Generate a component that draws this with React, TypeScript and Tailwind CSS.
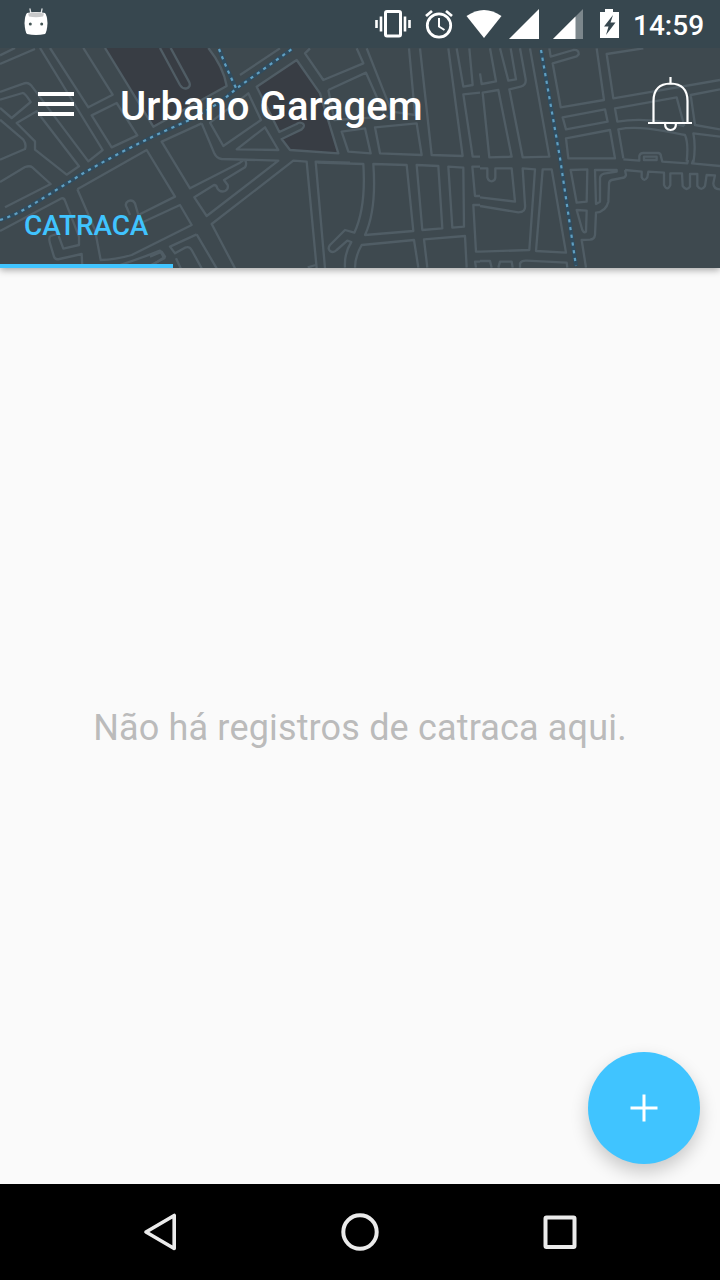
// The street map is drawn in tiles, each on a grid of a third of a pixel.
const mapTiles = [
  {
    x: 0,
    y: 48,
    d: "M0 22 45 0M0 48 105 3M120 0 308 306 265 340 98 118Q86 100 70 107L0 132M150 0 265 178 338 140 250 0M275 202 350 165 412 262 335 298ZM0 155 68 135Q75 135 92 162L35 210 0 180M0 215 70 275Q80 290 75 303L0 335M110 190 50 225 105 280 105 305 200 380 237 355ZM0 402 75 357Q90 352 97 358L152 408 15 478",
  },
  {
    x: 0,
    y: 130,
    d: "M0 303 185 205Q192 203 195 212L237 320 237 345 190 356 176 318M176 310 152 318Q145 322 150 340L162 380Q165 390 178 387L245 372 247 412M232 178 440 60 525 200 415 255 405 220Q398 208 385 213 373 220 380 232L390 255M232 178 285 300 302 390Q345 390 395 375L575 285 540 225 410 285M340 412Q430 382 480 362L493 385 440 412",
  },
  {
    x: 0,
    y: 0,
    d: "M315 144 460 380 680 258Q670 200 625 144M480 144 540 255Q548 268 560 265 573 260 568 247L512 144",
  },
  {
    x: 240,
    y: 40,
    d: "M0 105 120 25M50 140 170 60 240 160 295 340 150 330 125 297 185 268Q195 260 190 252 180 244 170 252L118 276ZM210 25 195 40 250 120 370 70 350 25M265 150 378 98 430 215M265 150 283 240 445 230M380 25 455 215 525 225 507 25M305 275 375 265 392 340 325 335ZM405 262 530 250 545 345 420 340ZM540 25 575 345 668 348 625 25M650 25 670 140 698 135 688 25M720 158 670 163 698 350 720 350",
  },
  {
    x: 150,
    y: 110,
    d: "M260 118 345 52 385 120ZM180 38 220 108 333 30 295 -50ZM155 40 35 95 120 235 270 158 280 150M155 40 192 128Q200 145 215 147L385 152 170 318 133 262 192 225Q200 225 202 235 210 248 225 243 236 238 233 225L222 210 285 172Q292 160 285 150M255 475 185 342 430 152 470 155 500 475M525 475 497 155 600 158M140 373 60 410 75 430 105 413Q118 408 125 420L155 475M140 373 200 475M0 440 35 425 45 440 0 470M78 445 92 475",
  },
  {
    x: 240,
    y: 150,
    d: "M232 38 370 42C375 120 370 190 343 248L315 240 270 285Q262 295 270 303 280 310 290 300L322 272 334 276Q312 310 315 353M400 42 500 45 520 243 375 255C405 190 405 110 400 42ZM345 353Q345 320 365 285L522 270 535 353M530 45 595 48 607 235 547 240ZM625 50 670 53 672 230 637 233ZM562 353 552 268 675 258 680 353M720 50 697 50 705 138 720 138M720 165 700 165 708 305 720 305M720 335 705 335 708 353M203 352 228 345",
  },
  {
    x: 480,
    y: 40,
    d: "M0 100 5 132 48 124 30 25M60 25 85 122 108 118 92 25M120 25 137 118Q139 136 122 140L88 148 128 352 208 350 150 25M8 158 55 150 95 350 28 352ZM208 25 212 50 280 30Q297 28 296 43L290 49 218 70 242 202 372 180 350 25M490 25 380 42 400 175 720 120M248 232 375 208 383 245 258 268ZM613 258 590 172 405 205 412 245Q500 230 613 258M720 148 632 165 645 255 720 268M258 295 390 270 405 355 265 355ZM430 355 415 268C480 255 560 275 615 285Q626 310 620 365M720 290 640 280Q648 320 640 370",
  },
  {
    x: 480,
    y: 150,
    d: "M430 28 478 32 478 18Q480 9 490 9L535 9Q543 10 543 20L547 35 622 40 624 30M640 30 636 40 720 48M492 20H530V30H492ZM0 55 22 55 22 82Q25 94 35 94 46 92 46 82L46 55 95 55 105 155 0 142M0 168 115 187Q138 187 135 165L128 55 165 58 148 300 0 305M188 58 215 58 258 308 168 303ZM272 60 322 58 320 155 290 158ZM290 180 320 182 318 245Q312 250 307 240ZM345 60 410 60 410 65 372 71Q360 75 360 85L360 155 348 162ZM435 60 438 75Q436 84 425 84L395 90Q387 92 387 102L385 155Q378 184 348 188L345 255Q343 268 330 269L305 270 318 353M435 60 485 65 485 82Q492 97 502 82L505 65 552 68 552 105Q562 125 571 105L571 70 606 70 608 108Q620 125 630 110L630 72 652 72 652 108Q664 125 675 108L680 75 705 76 700 100Q700 118 720 118M0 333 30 333 35 353M55 353 60 335 95 335 98 353M120 353 120 340Q125 331 140 332L260 338 262 353",
  },
];

const routes = [
  "M0 220Q16 215 32 205L82 174Q130 146 185 122 215 108 237 88L292 49",
  "M219 49Q227 70 237 90",
  "M541 50 560 158 576 266",
];

function StreetMap() {
  return (
    <svg
      className="absolute inset-0 h-full w-full"
      viewBox="0 48 720 220"
      fill="none"
    >
      <path
        d="M105 48 153 127 227 86Q223 67 208 48ZM257 87 297 60 320 93 338 153 290 150 281 138 303 128 301 123 279 132Z"
        fill="#383d44"
      />
      {mapTiles.map((tile) => (
        <path
          key={`${tile.x}-${tile.y}`}
          d={tile.d}
          transform={`translate(${tile.x} ${tile.y}) scale(.33333)`}
          stroke="#505d65"
          strokeWidth="7"
          strokeLinejoin="round"
        />
      ))}
      {routes.map((d) => (
        <g key={d}>
          <path d={d} stroke="#2f4c5f" strokeWidth="4" />
          <path d={d} stroke="#5f9fc2" strokeWidth="2.2" strokeDasharray="3.2 4.6" />
        </g>
      ))}
    </svg>
  );
}

function StatusBar() {
  return (
    <div className="relative z-10 flex h-12 items-center bg-[#37474f] text-white">
      <svg className="h-12 w-[60px]" viewBox="0 0 60 48">
        <path
          d="M30 9 31 14M42 9 41 14"
          stroke="#dde1e3"
          strokeWidth="1.3"
          strokeLinecap="round"
        />
        <path
          d="M27 13Q36 11 45 13 47 15 47.5 23 47 32 45 34 36 36 27 34 25 32 24.5 23 25 15 27 13Z"
          fill="#fff"
        />
        <path d="M28 13.5Q36 11.5 44 13.5L43 16.5Q36 18 29 16.5Z" fill="#c8c9ca" />
        <circle cx="30.3" cy="24" r="1.5" fill="#455" />
        <circle cx="41.7" cy="24" r="1.5" fill="#455" />
      </svg>
      <svg
        className="ml-auto h-12 w-[260px]"
        viewBox="370 0 260 48"
        fill="none"
        stroke="#fff"
      >
        {/* Vibrate */}
        <rect x="385.5" y="11.5" width="15" height="24.5" rx="1.5" strokeWidth="3" />
        <path d="M376.5 20V28M381 16.5V31.5M405 16.5V31.5M409.5 20V28" strokeWidth="2.6" />
        {/* Alarm */}
        <circle cx="439" cy="25.5" r="11.7" strokeWidth="2.8" />
        <path d="M439 18V26.5L444.5 30" strokeWidth="2" />
        <path d="M426 16 432 11M446 11 452 16" strokeWidth="2.8" />
        <g fill="#fff" stroke="none">
          {/* Wifi and mobile signals */}
          <path d="M466.5 16Q484 4 501.5 16L484 38Z" />
          <path d="M539 9V39H509Z" />
          <path d="M583 9V39H553Z" opacity=".35" />
          <path d="M575.5 16.5V39H553Z" />
          {/* Battery */}
          <path d="M605 9H613V12H619V38H600V12H605Z" />
          <path d="M613 15 604 26.5H608.5L606 35 615.5 22.5H610.5Z" fill="#37474f" />
        </g>
      </svg>
      <span className="mr-4 ml-[3px] w-[71px] pt-1 text-[28px] leading-none font-medium whitespace-nowrap">
        14:59
      </span>
    </div>
  );
}

function AppHeader() {
  return (
    <header className="relative h-[220px] bg-[#3e494f] shadow-[0_2px_7px_rgba(0,0,0,0.35)]">
      <StreetMap />
      <div className="relative flex h-full flex-col">
        <div className="flex h-28 items-center">
          <button aria-label="Menu" className="ml-[38px] flex w-9 flex-col gap-1.5">
            <span className="h-1 bg-white" />
            <span className="h-1 bg-white" />
            <span className="h-1 bg-white" />
          </button>
          <h1 className="ml-[46px] pt-1.5 text-[40px] leading-none font-medium tracking-[0.05px] text-white">
            Urbano Garagem
          </h1>
          <svg
            className="mr-7 ml-auto h-14 w-11"
            viewBox="648 76 44 56"
            fill="none"
            stroke="#fff"
            strokeWidth="2.2"
          >
            <path d="M670.5 77V84M653.5 123V101Q653.5 84 670.5 83.5 687.5 84 687.5 101V123M648 123H692M665 123Q665 130 670.5 130 676 130 676 123" />
          </svg>
        </div>
        <nav className="mt-auto flex">
          <button className="flex h-[84px] w-[173px] items-center border-b-4 border-[#40c4ff] pt-1 pl-6 text-[28px] font-medium tracking-[-0.1px] text-[#40c4ff]">
            CATRACA
          </button>
        </nav>
      </div>
    </header>
  );
}

function NavigationBar() {
  return (
    <footer className="flex h-24 items-center justify-between bg-black px-[140px]">
      <svg
        className="size-10"
        viewBox="0 0 40 40"
        fill="none"
        stroke="#ebebeb"
        strokeWidth="3.6"
        strokeLinejoin="round"
      >
        <path d="M34.2 3.5V36.5L6 20Z" />
      </svg>
      <svg className="size-10" viewBox="0 0 40 40" fill="none" stroke="#ebebeb" strokeWidth="4">
        <circle cx="20" cy="20" r="16.7" />
      </svg>
      <svg className="size-10" viewBox="0 0 40 40" fill="none" stroke="#ebebeb" strokeWidth="4">
        <rect x="5.5" y="5.5" width="29" height="29.5" rx="1" />
      </svg>
    </footer>
  );
}

export default function App() {
  return (
    <div className="flex h-[1280px] w-[720px] flex-col overflow-hidden bg-[#fafafa] font-[Roboto,sans-serif]">
      <StatusBar />
      <AppHeader />
      <main className="relative flex flex-1 items-center justify-center">
        <p className="pt-1 text-[36px] leading-none tracking-[0.16px] whitespace-nowrap text-[#bbb]">
          Não há registros de catraca aqui.
        </p>
        <button
          aria-label="Adicionar"
          className="absolute right-5 bottom-5 flex size-28 items-center justify-center rounded-full bg-[#40c4ff] shadow-[0_8px_18px_rgba(0,0,0,0.2)]"
        >
          <svg className="size-7" viewBox="0 0 28 28" stroke="#fff" strokeWidth="3">
            <path d="M14 .5V27.5M.5 14H27.5" />
          </svg>
        </button>
      </main>
      <NavigationBar />
    </div>
  );
}
